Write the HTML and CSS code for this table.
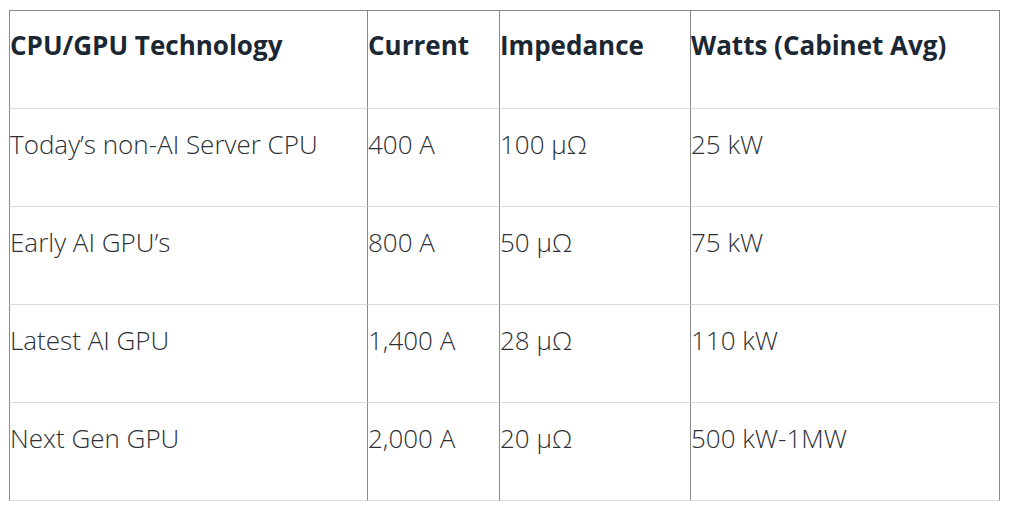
FILE: index.html
```html
<!DOCTYPE html>
<html>
<head>
<meta charset="utf-8">
<link rel="stylesheet" href="styles.css">
</head>
<body>
<table class="spec">
  <colgroup>
    <col class="c1"><col class="c2"><col class="c3"><col class="c4">
  </colgroup>
  <thead>
    <tr><th>CPU/GPU Technology</th><th>Current</th><th>Impedance</th><th>Watts (Cabinet Avg)</th></tr>
  </thead>
  <tbody>
    <tr><td>Today’s non-AI Server CPU</td><td>400 A</td><td>100 μΩ</td><td>25 kW</td></tr>
    <tr><td>Early AI GPU’s</td><td>800 A</td><td>50 μΩ</td><td>75 kW</td></tr>
    <tr><td>Latest AI GPU</td><td>1,400 A</td><td>28 μΩ</td><td>110 kW</td></tr>
    <tr><td>Next Gen GPU</td><td>2,000 A</td><td>20 μΩ</td><td>500 kW-1MW</td></tr>
  </tbody>
</table>
</body>
</html>
```
FILE: styles.css
```css
html, body {
  margin: 0;
  padding: 0;
  background: #ffffff;
}
body {
  font-family: "Open Sans", "Noto Sans", sans-serif;
}
.spec {
  margin: 10px 0 0 9px;
  border-collapse: separate;
  border-spacing: 0;
  table-layout: fixed;
  width: 991px;
  border-top: 1px solid #8a8a8a;
}
.c1 { width: 358px; }
.c2 { width: 132px; }
.c3 { width: 191px; }
.c4 { width: 310px; }
.spec th,
.spec td {
  height: 98px;
  box-sizing: border-box;
  padding: 0;
  text-align: left;
  vertical-align: top;
  border-left: 1px solid #8a8a8a;
  border-bottom: 1px solid #dcdcdc;
  white-space: nowrap;
  line-height: 30px;
  font-size: 26px;
}
.spec th:last-child,
.spec td:last-child {
  border-right: 1px solid #8a8a8a;
}
.spec th {
  font-weight: 700;
  font-size: 26px;
  color: #1b2733;
  padding-top: 19px;
}
.spec td {
  font-weight: 300;
  color: #2c3035;
  padding-top: 20px;
}
```
